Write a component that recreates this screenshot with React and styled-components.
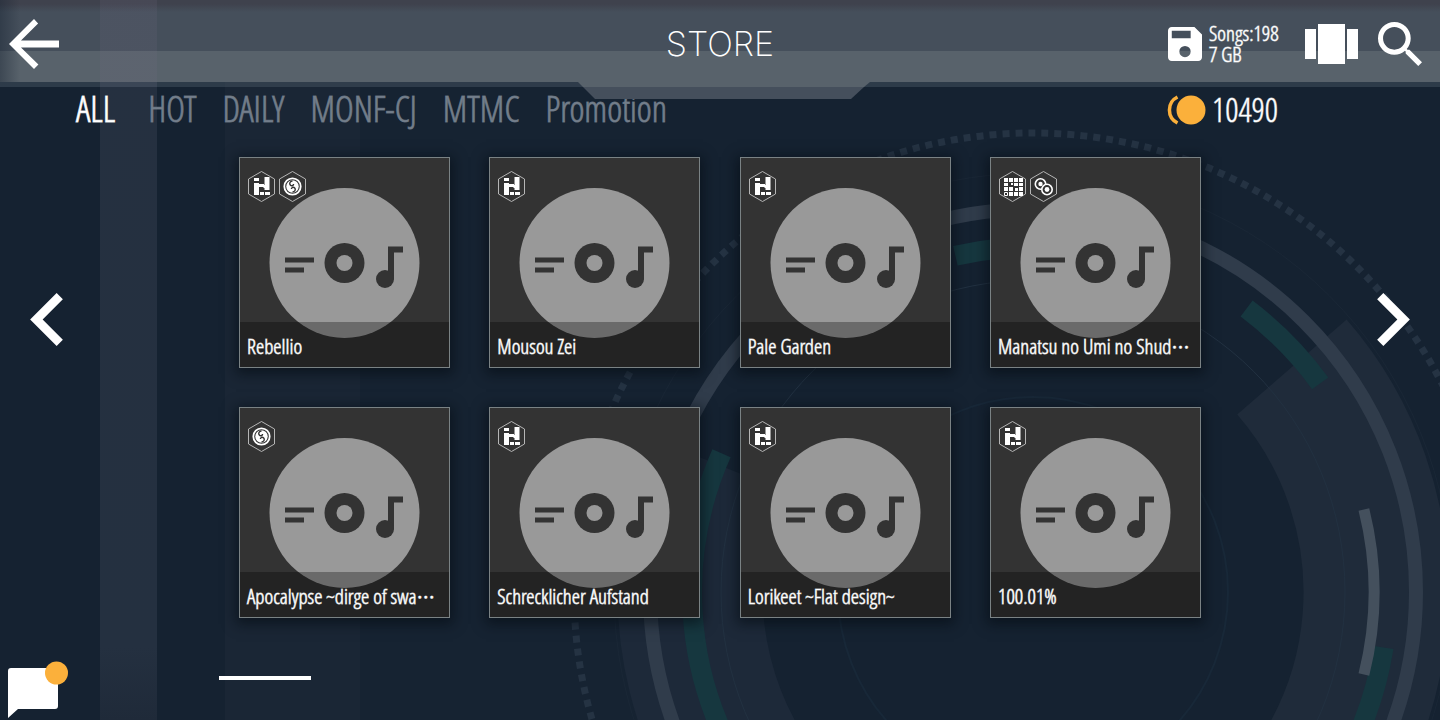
import React from 'react';
import styled, { createGlobalStyle } from 'styled-components';

const condensed = `"Open Sans Condensed Light", "Roboto Condensed", "Noto Sans CJK SC", sans-serif`;

const GlobalStyle = createGlobalStyle`
  *, *::before, *::after { box-sizing: border-box; }
  body {
    margin: 0;
    background: #152130;
    color: #fff;
    font-family: ${condensed};
  }
  button { font: inherit; color: inherit; background: none; border: 0; padding: 0; cursor: pointer; }
  svg { display: block; }
`;

const Page = styled.div`
  position: relative;
  isolation: isolate;
  min-height: 100vh;
  display: flex;
  flex-direction: column;
  overflow: hidden;
`;

const Backdrop = styled.svg`
  position: absolute;
  inset: 0;
  width: 100%;
  height: 100%;
  z-index: -1;
`;

const Header = styled.header`
  position: relative;
  display: grid;
  grid-template-columns: 1fr auto 1fr;
  align-items: center;
  height: 87px;
  padding: 5px 18px 0;
  border-bottom: 5px solid rgba(70, 84, 98, 0.5);
  background:
    linear-gradient(90deg, rgba(21, 33, 48, 0.4), rgba(21, 33, 48, 0) 20px),
    linear-gradient(90deg, transparent 100px, rgba(120, 110, 135, 0.14) 100px 157px, transparent 157px),
    linear-gradient(#3f424d 0 4px, #454f5b 12px, #454f5b 51px, #58626b 51px 82px, transparent 82px);
  background-origin: border-box;
`;

const HeaderNotch = styled.svg`
  position: absolute;
  top: 82px;
  left: calc(50% - 142px);
`;

const Title = styled.h1`
  margin: 0;
  font: 200 34px/44px Inter, sans-serif;
`;

const HeaderStart = styled.div`
  display: flex;
  margin-left: -9px;
`;

const HeaderTools = styled.div`
  justify-self: end;
  display: flex;
  align-items: center;
`;

const Storage = styled.div`
  display: flex;
  align-items: center;
  gap: 7px;
  width: 137px;
  font-size: 21px;
  line-height: 21px;
  -webkit-text-stroke: 1px rgba(255, 255, 255, 0.6);
  white-space: nowrap;
`;

const CarouselButton = styled.button`
  margin-right: 20px;
`;

const SubBar = styled.div`
  display: flex;
  justify-content: space-between;
  align-items: center;
  height: 44px;
  padding: 0 162px 0 76px;
`;

const Tabs = styled.nav`
  display: flex;
  gap: 26px;
`;

const Tab = styled.button`
  font-size: 36px;
  line-height: 44px;
  color: ${(p) => (p.$active ? '#fff' : '#737e8b')};
  -webkit-text-stroke: 1px ${(p) => (p.$active ? 'rgba(255, 255, 255, 0.8)' : 'rgba(115, 126, 139, 0.8)')};
  ${(p) => p.$active && 'margin-right: 7px;'}
`;

const Coins = styled.div`
  display: flex;
  align-items: center;
  gap: 6px;
  padding-top: 2px;
  font-size: 33px;
  line-height: 44px;
  -webkit-text-stroke: 1px rgba(255, 255, 255, 0.6);
`;

const Browser = styled.main`
  display: flex;
  justify-content: space-between;
  align-items: flex-start;
  padding: 26px 30px 43px;
`;

const PageArrow = styled.button`
  margin-top: 136px;
`;

const Grid = styled.ul`
  list-style: none;
  margin: 0;
  padding: 0;
  flex: 0 1 962px;
  display: grid;
  grid-template-columns: repeat(4, 211px);
  justify-content: space-between;
  row-gap: 39px;
`;

const Card = styled.button`
  position: relative;
  display: flex;
  flex-direction: column;
  justify-content: flex-end;
  width: 100%;
  height: 211px;
  border: 1px solid #7a8284;
  background: #333;
  box-shadow: 0 3px 12px 3px rgba(5, 12, 18, 0.6);
  text-align: left;
`;

const Cover = styled.svg`
  position: absolute;
  inset: 0;
  width: 100%;
  height: 100%;
`;

const Badges = styled.span`
  position: absolute;
  top: 13px;
  left: 8px;
  display: flex;
  gap: 4px;
`;

const Label = styled.span`
  position: relative;
  height: 45px;
  padding: 10px 7px 0;
  background: rgba(0, 0, 0, 0.3);
  font-size: 21px;
  line-height: 28px;
  white-space: nowrap;
  -webkit-text-stroke: 1px rgba(255, 255, 255, 0.65);
`;

const Ellipsis = styled.span`
  font-family: "Noto Sans CJK SC", sans-serif;
  font-size: 18px;
`;

const Footer = styled.footer`
  display: flex;
  align-items: flex-start;
  margin-top: auto;
  padding-left: 8px;
`;

const ChatButton = styled.button`
  margin-right: 151px;
`;

const PageMark = styled.div`
  width: 92px;
  height: 4px;
  margin-top: 15px;
  background: #fff;
`;

const arc = (r, from, to) => {
  const pt = (a) => {
    const t = (a * Math.PI) / 180;
    return `${(1033 + r * Math.cos(t)).toFixed(1)} ${(592 - r * Math.sin(t)).toFixed(1)}`;
  };
  return `M${pt(from)}A${r} ${r} 0 0 ${from > to ? 1 : 0} ${pt(to)}`;
};

function Background() {
  return (
    <Backdrop viewBox="0 0 1440 720" preserveAspectRatio="xMaxYMin slice" aria-hidden="true" fill="none">
      <defs>
        <linearGradient id="stripe" x1="0" y1="0" x2="0" y2="1">
          <stop offset="0" stopColor="#253040" />
          <stop offset="0.9" stopColor="#243040" />
          <stop offset="1" stopColor="#1f2a39" />
        </linearGradient>
      </defs>
      <rect width="1440" height="720" fill="#152231" />
      <rect x="225" width="135" height="720" fill="#1a2635" />
      <rect x="360" width="290" height="720" fill="#162332" />
      <rect x="100" width="57" height="720" fill="url(#stripe)" />
      <path d={arc(343, 41, -50)} stroke="#1f2b3a" strokeWidth="145" />
      <path d={arc(343, 158, 230)} stroke="#1d2939" strokeWidth="145" />
      <circle cx="1033" cy="592" r="459" stroke="#253343" strokeWidth="7" strokeDasharray="7 6" />
      <circle cx="1033" cy="592" r="419" stroke="#1a2736" />
      <circle cx="1033" cy="592" r="312" stroke="#223141" />
      <circle cx="1033" cy="592" r="195" stroke="#182838" strokeWidth="2" />
      <circle cx="1033" cy="592" r="383" stroke="#303c4b" strokeWidth="14" />
      <g stroke="#16373f" strokeWidth="20">
        <path d={arc(355, 53, 36)} />
        <path d={arc(355, -9, -40)} />
        <path d={arc(345, 103, 95)} />
        <path d={arc(341, 156, 210)} />
      </g>
      <path d={arc(341, 14, -14)} stroke="#44505d" strokeWidth="11" />
    </Backdrop>
  );
}

const glyphs = {
  bars: (
    <path
      d="M6 7h5v3H6zM6 12h5v12H6zM11 13h5v3h-5zM16.500 6h5v13h-5v-2h-1v-3h1zM12 21h4v3h-4zM17 21h5v3h-5z"
      fill="#fff"
    />
  ),
  swirl: (
    <g fill="none" stroke="#fff">
      <circle cx="13.500" cy="15.500" r="8.200" strokeWidth="1.800" />
      <circle cx="13.500" cy="15.500" r="6.200" fill="#fff" stroke="none" />
      <path d="M13.500 10c-2.500 0-3.500 2.500-2.200 4s3.300.5 3.300-1M13.500 21c2.500 0 3.500-2.500 2.200-4s-3.300-.5-3.300 1" stroke="#333" strokeWidth="1.400" />
    </g>
  ),
  pads: (
    <g fill="#fff">
      <path d="M5 7h4v4H5zM10 7h4v4h-4zM15 7h4v4h-4zM20 7h4v4h-4zM5 12h4v3H5zM12 12h2v2h-2zM15 12h4v3h-4zM20 12h4v3h-4zM5 16h4v4H5zM10 16h4v4h-4zM16 17h3v3h-3zM20 16h4v4h-4zM10 21h4v4h-4zM15 21h4v4h-4zM20 21h4v4h-4z" />
      <path d="M5.500 21.500h3v3h-3z" fill="none" stroke="#fff" />
    </g>
  ),
  rings: (
    <g fill="#fff" stroke="#fff" strokeWidth="1.600">
      <circle cx="10.500" cy="13" r="5.200" fill="none" />
      <circle cx="10.500" cy="13" r="2.200" stroke="none" />
      <circle cx="17" cy="18.500" r="5.200" fill="#333" />
      <circle cx="17" cy="18.500" r="2.400" stroke="none" />
    </g>
  ),
};

function Badge({ kind }) {
  return (
    <svg width="27" height="31" viewBox="0 0 27 31" role="img" aria-label={kind}>
      <path d="M13.500.5 26.500 8v15L13.500 30.500.5 23V8z" fill="#333" stroke="#c4c4c4" strokeWidth="0.900" />
      {glyphs[kind]}
    </svg>
  );
}

const songs = [
  { title: 'Rebellio', modes: ['bars', 'swirl'] },
  { title: 'Mousou Zei', modes: ['bars'] },
  { title: 'Pale Garden', modes: ['bars'] },
  { title: 'Manatsu no Umi no Shud', cut: true, modes: ['pads', 'rings'] },
  { title: 'Apocalypse ~dirge of swa', cut: true, modes: ['swirl'] },
  { title: 'Schrecklicher Aufstand', modes: ['bars'] },
  { title: 'Lorikeet ~Flat design~', modes: ['bars'] },
  { title: '100.01%', modes: ['bars'] },
];

function SongCard({ song }) {
  return (
    <Card type="button">
      <Cover viewBox="0 0 209 209" aria-hidden="true">
        <circle cx="104.500" cy="105" r="75" fill="#999" />
        <g fill="#333">
          <circle cx="104.500" cy="105" r="20" />
          <path d="M45 99.500h29v5H45zM45 109.500h19v5H45zM148 88.500h15v6h-9v27h-6z" />
          <circle cx="145" cy="121" r="9" />
        </g>
        <circle cx="104.500" cy="105" r="8" fill="#999" />
      </Cover>
      <Badges>
        {song.modes.map((kind) => (
          <Badge key={kind} kind={kind} />
        ))}
      </Badges>
      <Label>
        {song.title}
        {song.cut && <Ellipsis lang="zh-Hans">…</Ellipsis>}
      </Label>
    </Card>
  );
}

const tabs = ['ALL', 'HOT', 'DAILY', 'MONF-CJ', 'MTMC', 'Promotion'];

export default function App() {
  return (
    <>
      <GlobalStyle />
      <Page>
        <Background />
        <Header>
          <HeaderNotch width="292" height="17" viewBox="0 0 292 17" aria-hidden="true">
            <path d="M0 0h292l-6 5H5z" fill="#58626b" />
            <path d="M5 5h281l-13 12H17z" fill="#454f5c" />
          </HeaderNotch>
          <HeaderStart>
            <button type="button" aria-label="Back">
              <svg width="50" height="50" viewBox="4 4 16 16" fill="#fff">
                <path d="M20 10.900H7.830l5.490-5.490L12 4l-8 8 8 8 1.410-1.410L7.830 13.100H20z" />
              </svg>
            </button>
          </HeaderStart>
          <Title>STORE</Title>
          <HeaderTools>
            <Storage>
              <svg width="34" height="34" viewBox="3 3 18 18" fill="#fff" aria-hidden="true">
                <path d="M17 3H5c-1.100 0-2 .9-2 2v14c0 1.100.9 2 2 2h14c1.100 0 2-.9 2-2V7zm-5 16a3 3 0 1 1 0-6 3 3 0 0 1 0 6zm3-10H5V5h10z" />
              </svg>
              <div>
                Songs:198
                <br />7 GB
              </div>
            </Storage>
            <CarouselButton type="button" aria-label="Carousel view">
              <svg width="53" height="40" viewBox="0 0 53 40" fill="#fff">
                <path d="M0 5h11v30H0zM13 0h27v40H13zM42 5h11v30H42z" />
              </svg>
            </CarouselButton>
            <button type="button" aria-label="Search">
              <svg width="44" height="44" viewBox="3 3 17.490 17.490" fill="#fff">
                <path d="M15.500 14h-.79l-.28-.27A6.471 6.471 0 0 0 16 9.500 6.500 6.500 0 1 0 9.500 16c1.610 0 3.090-.59 4.230-1.570l.27.28v.79l5 4.990L20.490 19zm-6 0C7.010 14 5 11.990 5 9.500S7.010 5 9.500 5 14 7.010 14 9.500 11.990 14 9.500 14z" />
              </svg>
            </button>
          </HeaderTools>
        </Header>
        <SubBar>
          <Tabs>
            {tabs.map((name, i) => (
              <Tab key={name} type="button" $active={i === 0}>
                {name}
              </Tab>
            ))}
          </Tabs>
          <Coins>
            <svg width="40" height="30" viewBox="0 0 40 30" aria-hidden="true">
              <circle cx="25" cy="15" r="14.500" fill="#fbb03b" />
              <path d="M11.500 2a14.500 14.500 0 0 0 0 26" fill="none" stroke="#fbb03b" strokeWidth="3.500" />
            </svg>
            10490
          </Coins>
        </SubBar>
        <Browser>
          <PageArrow type="button" aria-label="Previous page">
            <svg width="33" height="53" viewBox="8 6 7.410 12" fill="#fff">
              <path d="M15.410 7.410 14 6l-6 6 6 6 1.410-1.410L10.830 12z" />
            </svg>
          </PageArrow>
          <Grid>
            {songs.map((song) => (
              <li key={song.title}>
                <SongCard song={song} />
              </li>
            ))}
          </Grid>
          <PageArrow type="button" aria-label="Next page">
            <svg width="33" height="53" viewBox="8.590 6 7.410 12" fill="#fff">
              <path d="M10 6 8.590 7.410 13.170 12l-4.580 4.590L10 18l6-6z" />
            </svg>
          </PageArrow>
        </Browser>
        <Footer>
          <ChatButton type="button" aria-label="Messages">
            <svg width="60" height="59" viewBox="0 0 60 59">
              <path d="M3 7h44q3 0 3 3v35q0 3-3 3H10L0 57V10q0-3 3-3z" fill="#fff" />
              <circle cx="48.500" cy="12" r="11.500" fill="#fbb03b" />
            </svg>
          </ChatButton>
          <PageMark />
        </Footer>
      </Page>
    </>
  );
}
